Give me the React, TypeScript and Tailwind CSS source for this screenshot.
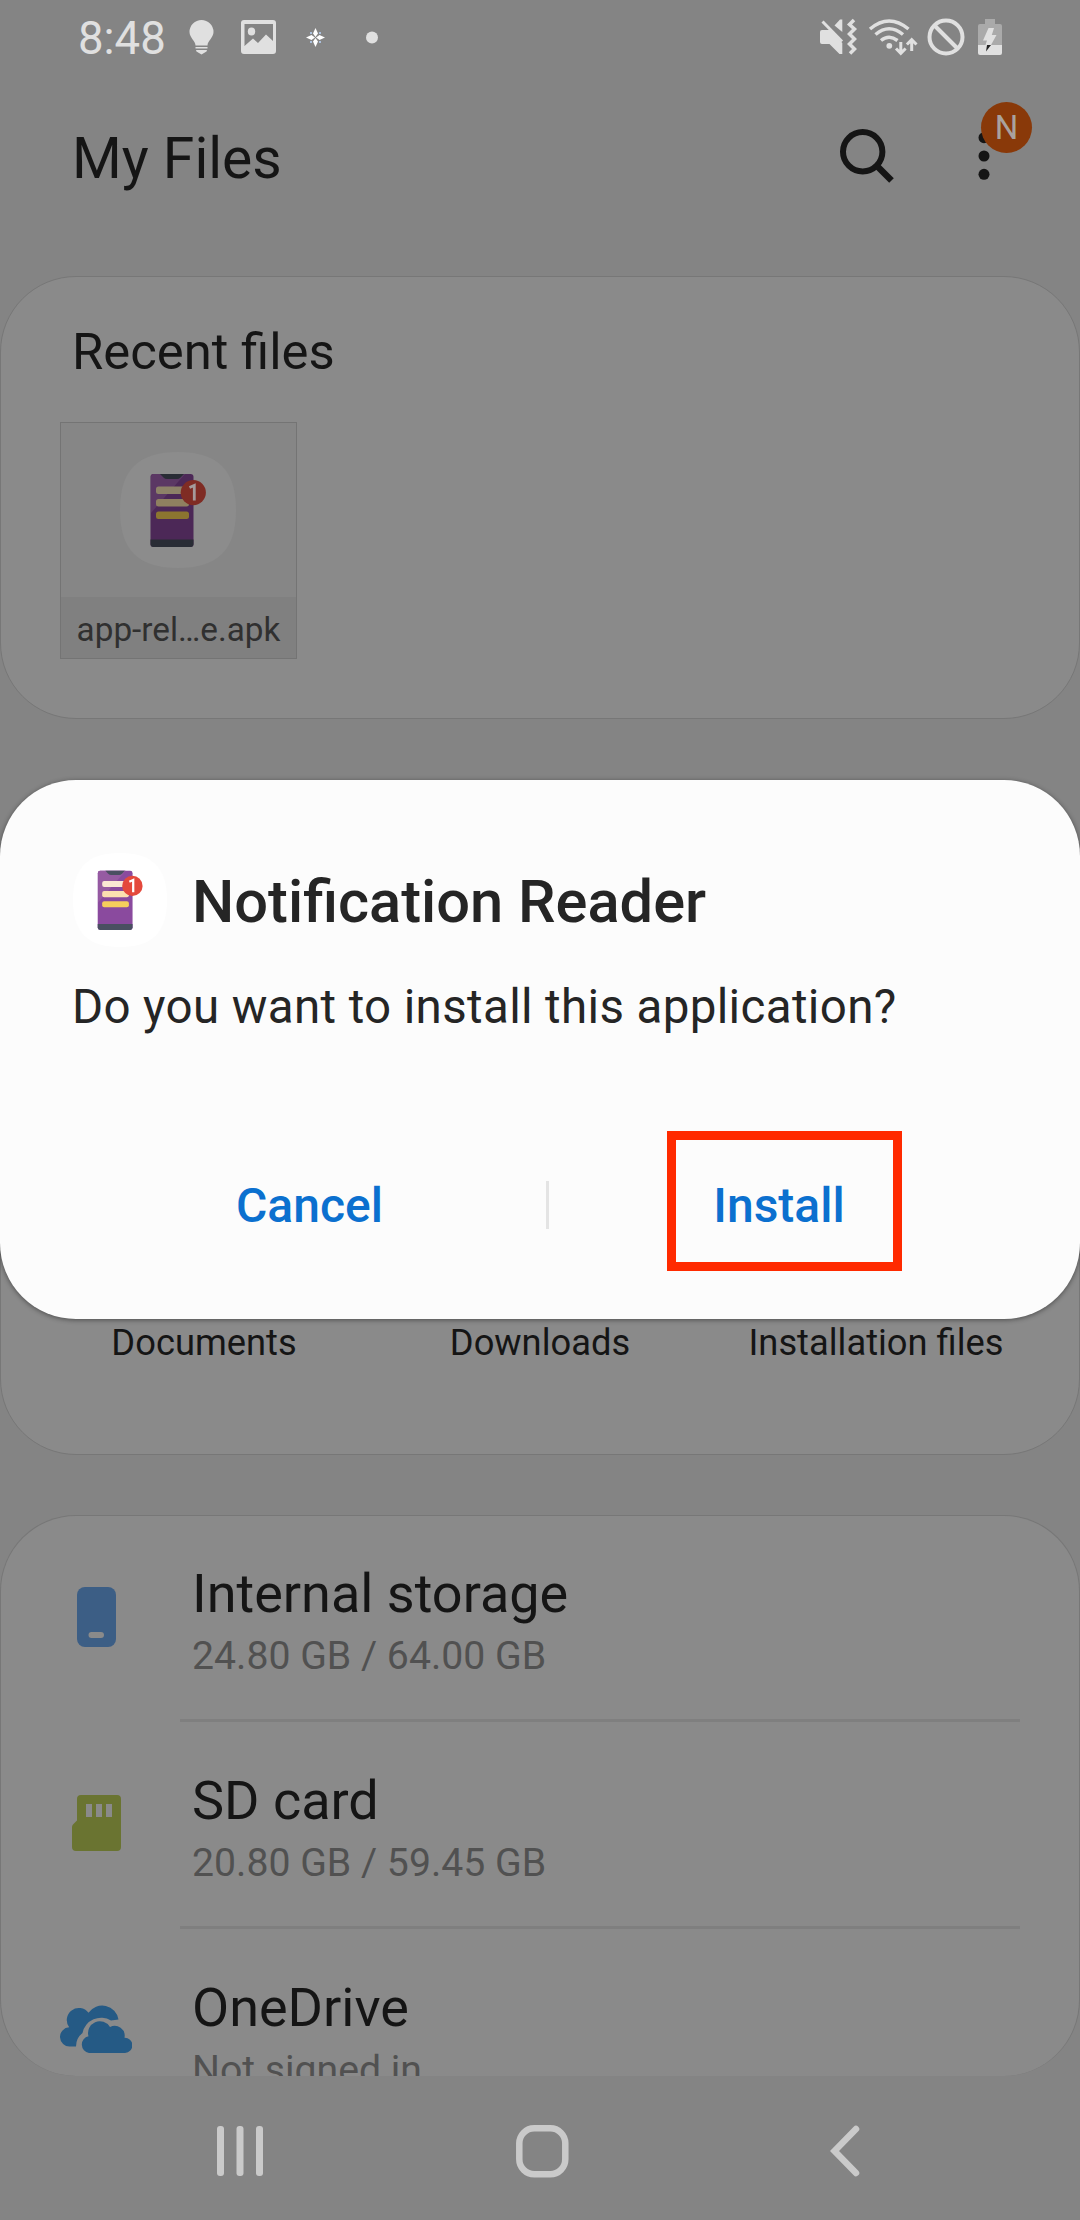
import React from "react";

function AppIcon({ size, dim }: { size: number; dim?: boolean }) {
  const c = dim
    ? { tile: "#8c8c8c", body: "#4c2857", light: "#5b3864", dark: "#292c35", a: "#8d8268", b: "#8f8060", y: "#8c7530", badge: "#7f2c24", one: "#a59b9b" }
    : { tile: "#ffffff", body: "#8a4a9e", light: "#965ba2", dark: "#4a4f61", a: "#fbe8d3", b: "#fbe0b0", y: "#f6ce5c", badge: "#e4493c", one: "#ffffff" };
  return (
    <svg width={size} height={size} viewBox="0 0 116 116" className="shrink-0">
      <path d="M58 0C98 0 116 18 116 58S98 116 58 116S0 98 0 58S18 0 58 0Z" fill={c.tile} />
      <rect x="30.500" y="22" width="43" height="73" rx="3" fill={c.body} />
      <path d="M33.500 22H65L31 61V24.500A2.500 2.500 0 0 1 33.500 22Z" fill={c.light} />
      <path d="M40 22H64L60.500 25.500Q59 27 57 27H47Q45 27 43.500 25.500Z" fill={c.dark} />
      <path d="M30.500 87.500H73.500V92Q73.500 95 70.500 95H33.500Q30.500 95 30.500 92Z" fill={c.dark} />
      <rect x="36" y="34.500" width="33" height="7.500" rx="2.500" fill={c.a} />
      <rect x="36" y="47" width="33" height="7.500" rx="2.500" fill={c.b} />
      <rect x="36" y="59.500" width="33" height="7.500" rx="2.500" fill={c.y} />
      <circle cx="73.300" cy="40.600" r="12.600" fill={c.badge} />
      <path d="M69.500 35.500L74.300 33.400V48.500" fill="none" stroke={c.one} strokeWidth="2.800" />
    </svg>
  );
}

function StatusBar() {
  return (
    <div className="flex h-[74px] items-center pl-[78px] pr-[77px] pt-[3px] text-[45.5px] leading-[70px] text-[#e0e0e0]">
      <span className="w-[111px]">8:48</span>
      <svg width="190" height="36" viewBox="0 0 190 36" className="mb-[3px]" fill="#e0e0e0">
        <path d="M12.500 1A12 12 0 0 1 24.500 13C24.500 18.500 18.500 22 18.500 26.500H6.500C6.500 22 .5 18.500 .5 13A12 12 0 0 1 12.500 1Z" />
        <path d="M6.500 28H18.500V29.500H6.500ZM7 31H18L17.500 32.500L12.500 35.500L7.500 32.500Z" />
        <path fillRule="evenodd" d="M55 1H84Q87 1 87 4V32Q87 35 84 35H55Q52 35 52 32V4Q52 1 55 1ZM55.500 5V27L64 19.500L69 24L77 15.500L84 22V5Z" />
        <ellipse cx="62.500" cy="12.500" rx="3.700" ry="4" />
        <path fill="#fff" d="M126.500 9L129 14.500L126.500 18L124 14.500ZM126.500 28L129 22.500L126.500 19L124 22.500ZM117 18.500L122.500 16L126 18.500L122.500 21ZM136 18.500L130.500 16L127 18.500L130.500 21Z" />
        <path fill="#abc0dd" d="M121 13h2v2h-2zM130 13h2v2h-2zM121 22h2v2h-2zM130 22h2v2h-2z" />
        <circle cx="183" cy="18.500" r="6" />
      </svg>
      <svg width="184" height="38" viewBox="819 18 184 38" className="mb-[3px] ml-auto" fill="#e0e0e0">
        <path d="M822 30H830L842.300 43V54H839.500L829.500 44H822Q820 44 820 42V32Q820 30 822 30ZM840 19.500H842.300V32L834.500 25.500Z" />
        <path d="M822.500 21.500L842 41.500" stroke="#e0e0e0" strokeWidth="3" />
        <path d="M854 20L849.500 24.500L854.500 29L849.500 34L854.500 39L849.500 44L854.500 49L850 53.500" fill="none" stroke="#e0e0e0" strokeWidth="3.500" />
        <g fill="none" stroke="#e0e0e0" strokeWidth="3.500">
          <path d="M870 29Q889 13 908.500 29M875.500 34.500Q889 23 903 34.500M881 40.500Q889 34 897.500 40.500" />
        </g>
        <circle cx="889.300" cy="45.800" r="2.900" />
        <g fill="none" stroke="#e0e0e0" strokeWidth="3">
          <path d="M900.800 42V53M896 48.500L900.800 53.300L905.600 48.500M911.700 51V40M906.900 44.500L911.700 39.700L916.500 44.500" />
        </g>
        <g fill="none" stroke="#e0e0e0" strokeWidth="4">
          <circle cx="946" cy="37" r="16.500" />
          <path d="M934.500 25.500L957.500 48.500" />
        </g>
        <path d="M985 19H995V24H1000Q1002 24 1002 26V45H978V26Q978 24 980 24H985Z" fill="#aaa" />
        <path d="M978 45H1002V53Q1002 55 1000 55H980Q978 55 978 53Z" />
        <path d="M988.500 28H994L991.800 35H996.500L991 45H985.500L987 40.500H983Z" fill="#e0e0e0" />
        <path d="M987 45H991L986 51.500Z" fill="#222" />
      </svg>
    </div>
  );
}

function Header() {
  return (
    <header className="flex h-[202px] items-start pl-[72px] pr-[48px] text-[#151515]">
      <h1 className="mt-[45px] text-[57px] leading-[80px]">My Files</h1>
      <svg width="54" height="54" viewBox="0 0 54 54" className="ml-auto mt-[55px]" fill="none" stroke="#151515">
        <circle cx="22.700" cy="22.700" r="19.700" strokeWidth="6" />
        <path d="M36.500 36.500L51.500 51.500" strokeWidth="6.500" />
      </svg>
      <div className="relative ml-[87px] mt-[27px] h-[90px] w-[51px]">
        <svg width="12" height="50" viewBox="0 0 12 50" className="mt-[31px] -ml-[3px]" fill="#151515">
          <circle cx="6" cy="5.700" r="5.500" />
          <circle cx="6" cy="24" r="5.500" />
          <circle cx="6" cy="42.300" r="5.500" />
        </svg>
        <span className="absolute left-0 top-[1px] flex size-[51px] items-center justify-center rounded-full bg-[#893909] text-[33px] text-[#a9a29e]">
          N
        </span>
      </div>
    </header>
  );
}

const storages = [
  {
    name: "Internal storage",
    detail: "24.80 GB / 64.00 GB",
    icon: (
      <svg width="39" height="60" viewBox="0 0 39 60" className="ml-[17px]">
        <rect width="39" height="60" rx="8" fill="#3c5e85" />
        <rect x="11.500" y="45" width="15.500" height="6" rx="3" fill="#8a8a8a" />
      </svg>
    ),
  },
  {
    name: "SD card",
    detail: "20.80 GB / 59.45 GB",
    icon: (
      <svg width="49" height="56" viewBox="0 0 49 56" className="ml-3">
        <path d="M9 0H45Q49 0 49 4V52Q49 56 45 56H4Q0 56 0 52V32Q0 30.500 1 29.500L5 25.500V4Q5 0 9 0Z" fill="#6a7431" />
        <path d="M14 9h6v13h-6zM24 9h6v13h-6zM34 9h6v13h-6z" fill="#8a8a8a" />
      </svg>
    ),
  },
  {
    name: "OneDrive",
    detail: "Not signed in",
    icon: (
      <svg width="72" height="50" viewBox="0 0 72 50" fill="#255a85">
        <path d="M10 41.500A9.600 9.600 0 0 1 9.200 22.300A12 12 0 0 1 28.500 7.800A16.500 16.500 0 0 1 58.500 14.500L51 15.500A19 19 0 0 0 22.500 28Q16 33 16 41.500Z" />
        <path d="M29 48A8.500 8.500 0 0 1 28.500 31.300A11.800 11.800 0 0 1 50 22A10 10 0 0 1 64.500 32.700A7.600 7.600 0 0 1 65 48Z" />
      </svg>
    ),
  },
];

function Dialog() {
  return (
    <div role="dialog" className="absolute inset-x-0 top-[780px] h-[539px] rounded-[76px] bg-[#fcfcfc] text-[#252525] shadow-[0_1px_5px_rgba(0,0,0,0.45)]">
      <div className="flex items-center pl-[73px] pt-[73px]">
        <AppIcon size={94} />
        <h2 className="ml-[25px] pt-[5px] text-[59.6px] font-medium leading-[89px]">Notification Reader</h2>
      </div>
      <p className="mt-[30px] pl-[72px] text-[47.5px] leading-[60px] tracking-[0.36px]">Do you want to install this application?</p>
      <div className="mt-[94px] flex h-[140px] items-center text-[48px] font-medium text-[#0b70cf]">
        <button className="ml-[72px] w-[474px] pt-[10px] pl-[1px]">Cancel</button>
        <span className="mt-[8px] h-12 w-[3px] bg-[#e4e4e4]" />
        <button className="ml-[118px] h-[140px] w-[235px] border-[9px] border-[#ff2a00] pr-[11px] pt-[10px]">Install</button>
      </div>
    </div>
  );
}

export default function App() {
  return (
    <div className="relative flex h-[2220px] w-[1080px] flex-col overflow-hidden bg-[#848484] font-['Roboto',sans-serif]">
      <StatusBar />
      <Header />
      <section className="h-[443px] shrink-0 rounded-[76px] border border-[#777] bg-[#8a8a8a] pt-[45px]">
        <h2 className="pl-[71px] text-[50.8px] leading-[60px] text-[#151515]">Recent files</h2>
        <div className="ml-[59px] mt-10 flex h-[237px] w-[237px] flex-col border border-[#747474] bg-[#868686]">
          <div className="flex h-[174px] shrink-0 justify-center pr-px pt-[29px]">
            <AppIcon size={116} dim />
          </div>
          <div className="h-[61px] bg-[#808080] pt-1 text-center text-[33.3px] leading-[57px] text-[#303030]">app-rel…e.apk</div>
        </div>
      </section>
      <section className="mt-[61px] flex h-[675px] shrink-0 items-end rounded-[76px] border border-[#777] bg-[#8a8a8a] px-[35px] pb-[89px] text-[36.3px] leading-[44px] text-[#151515]">
        <span className="w-[336px] text-center">Documents</span>
        <span className="w-[336px] text-center">Downloads</span>
        <span className="w-[336px] text-center">Installation files</span>
      </section>
      <section className="mt-[60px] h-[561px] shrink-0 overflow-hidden rounded-[76px] border border-b-0 border-[#777] bg-[#8a8a8a] px-[59px]">
        {storages.map((s, i) => (
          <div key={s.name} className={i === 0 ? "flex h-[206px]" : "flex h-[207px]"}>
            <div className="flex w-[120px] shrink-0 items-center pb-[5px]">{s.icon}</div>
            <div className={i < 2 ? "flex-1 border-b-[3px] border-[#7f7f7f] pl-3" : "flex-1 pl-3"}>
              <div className={i === 0 ? "mt-[44px] text-[54px] leading-[68px] text-[#151515]" : "mt-[45px] text-[54px] leading-[68px] text-[#151515]"}>{s.name}</div>
              <div className="text-[39.2px] leading-[56px] text-[#515151]">{s.detail}</div>
            </div>
          </div>
        ))}
      </section>
      <nav className="flex flex-1 items-center pl-[217px] pt-[6px]">
        <svg width="47" height="52" viewBox="0 0 47 52" fill="#cacaca">
          <rect x="0" y="1" width="7" height="50" rx="3" />
          <rect x="19.500" y="1" width="7" height="50" rx="3" />
          <rect x="39" y="1" width="7" height="50" rx="3" />
        </svg>
        <svg width="53" height="53" viewBox="0 0 53 53" className="ml-[252px]" fill="none" stroke="#cacaca" strokeWidth="6.500">
          <rect x="3.300" y="3.300" width="46" height="46" rx="15" />
        </svg>
        <svg width="31" height="52" viewBox="0 0 31 52" className="ml-[261px]" fill="none" stroke="#cacaca" strokeWidth="6.500" strokeLinecap="round">
          <path d="M26 4L4.500 26L26 48" />
        </svg>
      </nav>
      <Dialog />
    </div>
  );
}
